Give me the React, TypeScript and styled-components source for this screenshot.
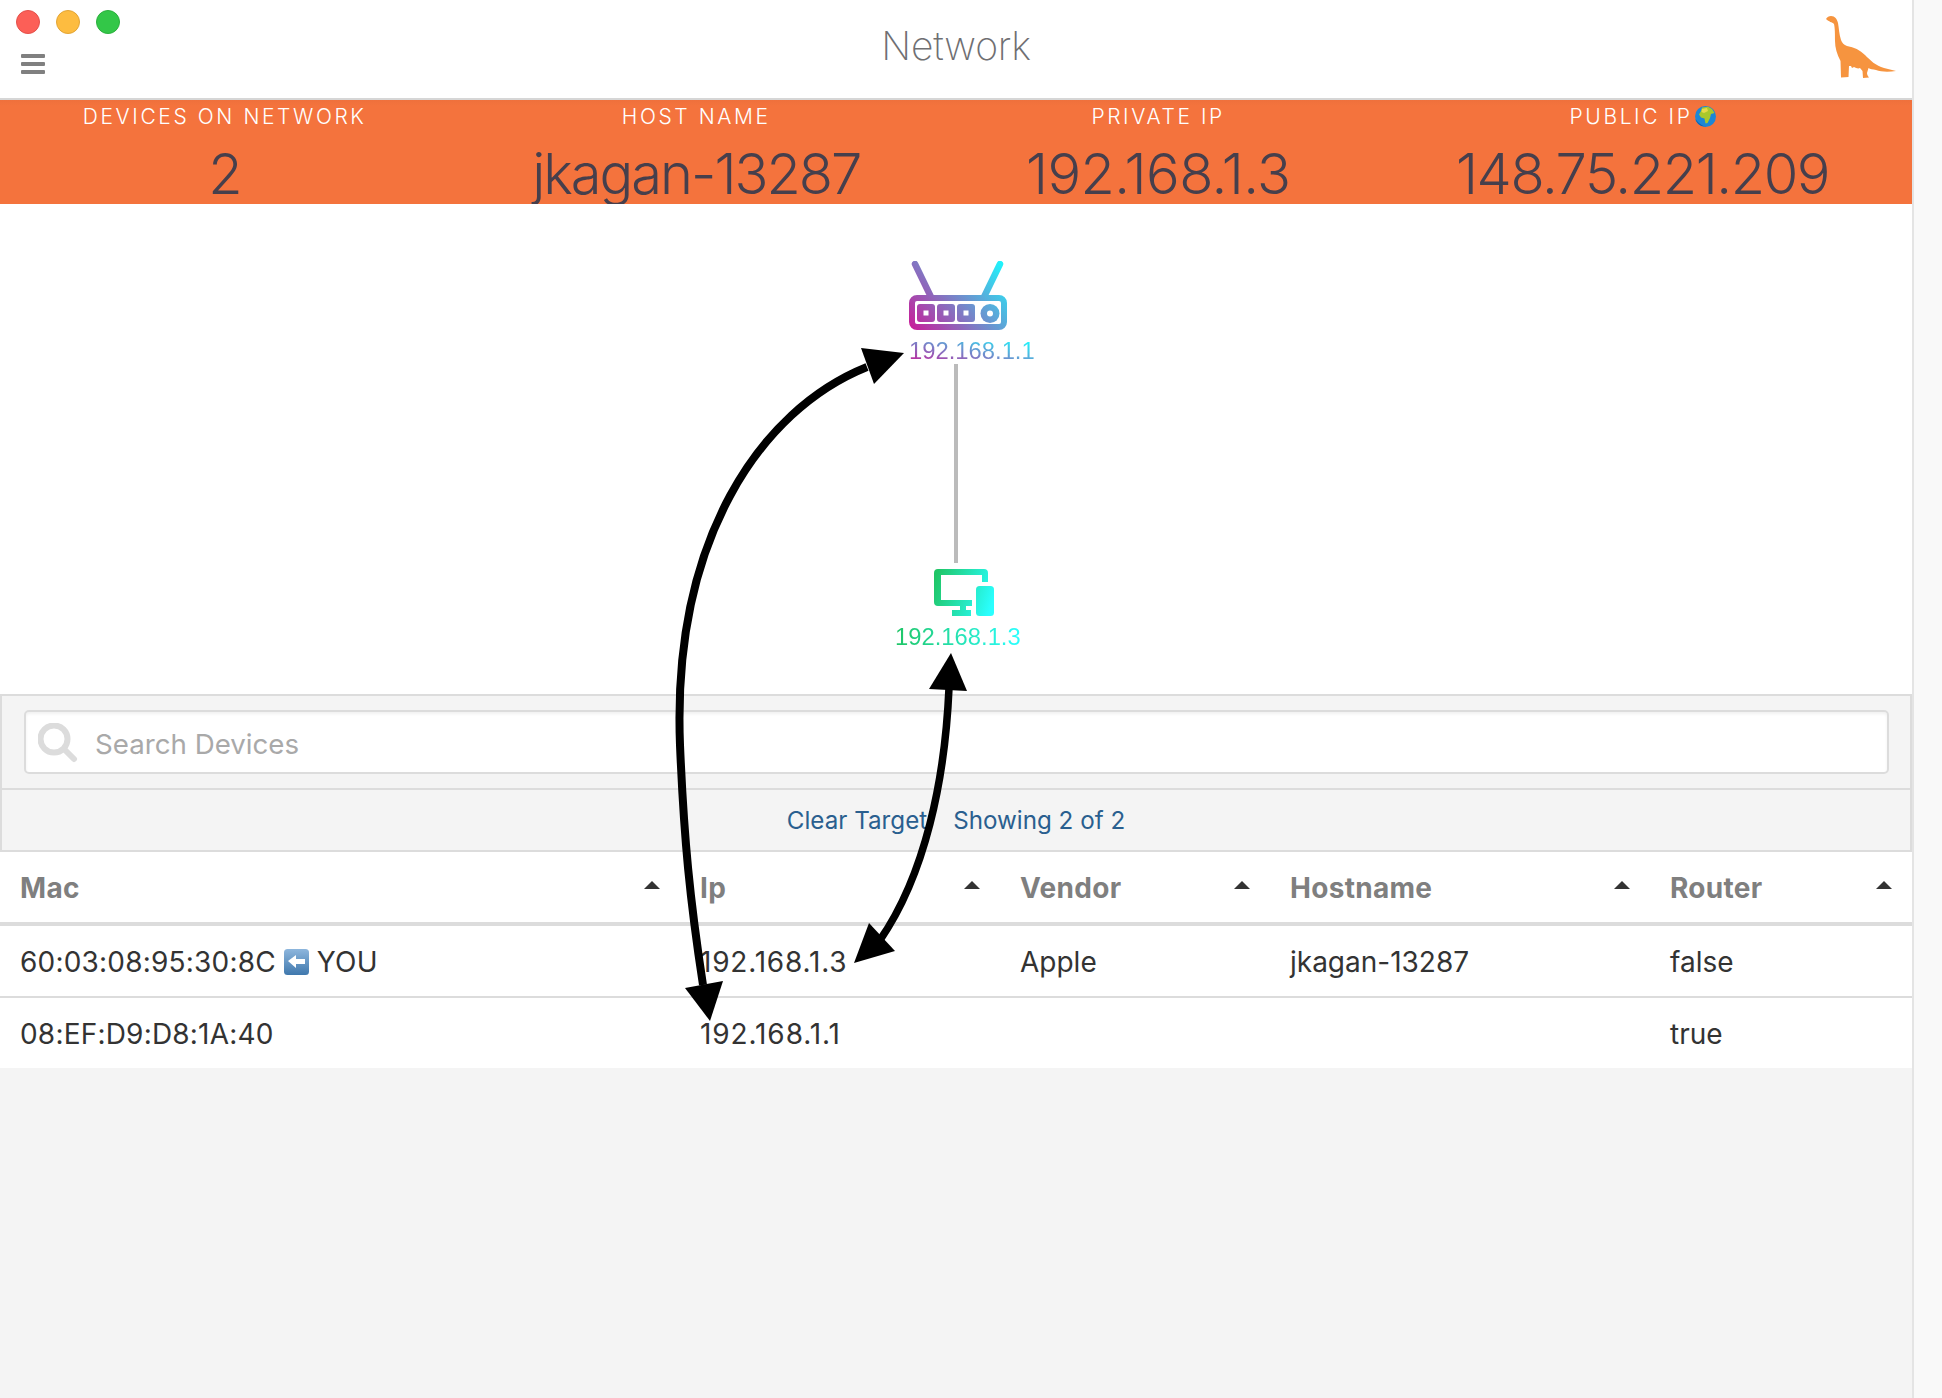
import React from "react";
import styled, { createGlobalStyle } from "styled-components";

const Global = createGlobalStyle`
  html, body { margin: 0; padding: 0; background: #f9f9f9; }
  * { box-sizing: border-box; }
  body { font-family: Inter, "Noto Sans", "Liberation Sans", sans-serif; }
`;

const Page = styled.div`
  position: relative;
  display: flex;
  width: 1942px;
  height: 1398px;
  overflow: hidden;
`;
const Main = styled.main`
  width: 1914px;
  height: 100%;
  background: #f4f4f4;
  border-right: 2px solid #e4e4e4;
  display: flex;
  flex-direction: column;
`;
const Strip = styled.aside`
  flex: 1;
  background: #f9f9f9;
`;
const TitleBar = styled.header`
  height: 100px;
  flex: none;
  background: #fff;
  border-bottom: 2px solid #d6d6d6;
  display: grid;
  grid-template-columns: 1fr auto 1fr;
  align-items: center;
`;
const LeftCluster = styled.div`
  display: flex;
  flex-direction: column;
  align-self: start;
  padding: 10px 0 0 16px;
`;
const Lights = styled.div`
  display: flex;
  gap: 16px;
`;
const Light = styled.span<{ $fill: string; $edge: string }>`
  width: 24px;
  height: 24px;
  border-radius: 50%;
  background: ${(p) => p.$fill};
  border: 1px solid ${(p) => p.$edge};
`;
const Burger = styled.div`
  margin: 20px 0 0 5px;
  width: 24px;
  display: flex;
  flex-direction: column;
  gap: 4px;
`;
const BurgerBar = styled.span`
  height: 4px;
  border-radius: 1px;
  background: #808080;
`;
const Title = styled.h1`
  margin: 0;
  position: relative;
  top: -4px;
  font-size: 39px;
  font-weight: 200;
  letter-spacing: -0.2px;
  color: #6f6f72;
`;
const DinoSlot = styled.div`
  justify-self: end;
  align-self: start;
  padding: 16px 16px 0 0;
  display: flex;
`;
const Stats = styled.section`
  height: 104px;
  flex: none;
  background: linear-gradient(#ef703c, #f4733d 6px);
  display: flex;
  justify-content: space-around;
`;
const Stat = styled.div`
  display: flex;
  flex-direction: column;
  align-items: center;
`;
const StatLabel = styled.div`
  display: flex;
  align-items: center;
  height: 28px;
  margin-top: 2px;
  font-size: 21px;
  letter-spacing: 2.6px;
  font-weight: 300;
  color: #fff;
  white-space: nowrap;
`;
const StatValue = styled.div<{ $track: number }>`
  font-size: 56px;
  line-height: 56px;
  margin-top: 16px;
  font-weight: 300;
  letter-spacing: ${(p) => p.$track}px;
  color: #463f4c;
  white-space: nowrap;
`;
const Graph = styled.section`
  position: relative;
  flex: none;
  height: 490px;
  background: #fff;
`;
const Node = styled.div<{ $x: number; $y: number }>`
  position: absolute;
  left: ${(p) => p.$x}px;
  top: ${(p) => p.$y}px;
  display: flex;
  flex-direction: column;
  align-items: flex-start;
`;
const NodeLabel = styled.span<{ $grad: string; $gap: number }>`
  font-family: "Liberation Sans", Arial, sans-serif;
  font-size: 23.8px;
  line-height: 28px;
  margin-top: ${(p) => p.$gap}px;
  background: ${(p) => p.$grad};
  -webkit-background-clip: text;
  background-clip: text;
  color: transparent;
`;
const Edge = styled.div`
  position: absolute;
  left: 954px;
  top: 160px;
  width: 4px;
  height: 199px;
  background: #bbb;
`;
const DeviceIcon = styled.svg`
  margin-left: 39px;
`;
const SearchPanel = styled.div`
  flex: none;
  height: 96px;
  background: #f4f4f4;
  border: 2px solid #dcdcdc;
  padding: 14px 21px 0 22px;
`;
const SearchBox = styled.div`
  height: 64px;
  background: #fff;
  border: 2px solid #dcdcdc;
  border-radius: 5px;
  box-shadow: inset 0 2px 3px rgba(0, 0, 0, 0.06);
  display: flex;
  align-items: center;
  padding: 2px 0 0 12px;
  gap: 17px;
`;
const Placeholder = styled.span`
  font-size: 27.7px;
  color: #a9a9a9;
  position: relative;
  top: 1px;
`;
const StatusBar = styled.div`
  flex: none;
  height: 62px;
  background: #f4f4f4;
  border: 2px solid #dcdcdc;
  border-top: 0;
  display: flex;
  justify-content: center;
  align-items: center;
  gap: 26px;
  font-size: 24.2px;
  color: #2a5f8f;
`;
const Row = styled.div<{ $head?: boolean; $last?: boolean }>`
  flex: none;
  display: grid;
  grid-template-columns: 680px 320px 270px 380px 262px;
  background: #fff;
  height: ${(p) => (p.$head ? 74 : p.$last ? 70 : 72)}px;
  border-bottom: ${(p) => (p.$head ? 4 : p.$last ? 0 : 2)}px solid #dcdcdc;
`;
const HeadCell = styled.div`
  display: flex;
  align-items: center;
  justify-content: space-between;
  padding: 2px 20px 0 20px;
  font-size: 28px;
  font-weight: 700;
  letter-spacing: 0.3px;
  color: #7f7f7f;
`;
const Caret = styled.span`
  width: 0;
  height: 0;
  margin-bottom: 6px;
  border-left: 8px solid transparent;
  border-right: 8px solid transparent;
  border-bottom: 8px solid #333;
`;
const Cell = styled.div<{ $track?: number }>`
  display: flex;
  align-items: center;
  gap: 8px;
  padding: 2px 0 0 20px;
  font-size: 28px;
  letter-spacing: ${(p) => p.$track ?? 0}px;
  color: #333;
  white-space: nowrap;
`;
const Arrows = styled.svg`
  position: absolute;
  left: 0;
  top: 0;
  pointer-events: none;
`;

const columns = ["Mac", "Ip", "Vendor", "Hostname", "Router"];

const Dino = () => (
  <svg width="70" height="62" viewBox="0 0 70 62" aria-hidden>
    <path
      fill="#f6943f"
      d="M0 3 C1 1 3 0 5 0 C9 0 11 3 12 7 C13 12 13 18 15 24 C16 27 18 29 21 30 C28 31 34 34 39 39 C44 44 50 50 58 52 C62 53 66 54 70 55 C63 56 55 56 50 54 C47 53.5 44 53 42.5 52 L41 57 C41 59 42 60 43 61.5 L37 62 L36.5 55 L34 52 C32 53 30 52 28 51 L26 52 L25 50 L23 50 L22.5 61 L15 61.5 L14.5 45 C11 38 9 32 9 25 C9 19 9 12 8 8 C6 6 3 6 0 3 Z"
    />
  </svg>
);

const Globe = () => (
  <svg width="21" height="21" viewBox="0 0 21 21" aria-hidden style={{ marginLeft: 2 }}>
    <circle cx="10.5" cy="10.5" r="10.5" fill="#1c86d6" />
    <path fill="#a9c82c" d="M7 1.5 L13 .8 L17 3 L19.5 7 L16 8 L15 12 L12.5 17 L10.5 17.5 L9.5 12.5 L6 11.5 L4 8.5 L6 5 Z" />
    <path fill="#e8d94a" d="M7 3 L12 2 L13 5 L9 7 L6.5 6 Z" />
    <path fill="#0e5aa8" d="M0.5 13 C3 17 7 20 11 20.5 C6 21 1.5 17 0.5 13 Z" />
  </svg>
);

const BackEmoji = () => (
  <svg width="25" height="26" viewBox="0 0 25 26" aria-hidden>
    <defs>
      <linearGradient id="bk" x1="0" y1="0" x2="0" y2="1">
        <stop offset="0" stopColor="#8db6dd" />
        <stop offset="1" stopColor="#3f78ad" />
      </linearGradient>
    </defs>
    <rect width="25" height="26" rx="3.5" fill="url(#bk)" />
    <path fill="#fff" d="M4 12 L12 6 L12 10 L21 10 L21 15 L12 15 L12 19 Z" />
  </svg>
);

const SearchIcon = () => (
  <svg width="40" height="40" viewBox="0 0 40 40" aria-hidden>
    <circle cx="16" cy="16" r="13.5" fill="none" stroke="#dcdcdc" strokeWidth="6" />
    <path d="M26 26 L36 36" stroke="#dcdcdc" strokeWidth="6" strokeLinecap="round" />
  </svg>
);

const RouterIcon = () => (
  <svg width="98" height="70" viewBox="0 0 98 70" aria-hidden>
    <defs>
      <linearGradient id="rt" gradientUnits="userSpaceOnUse" x1="8" y1="72" x2="90" y2="0">
        <stop offset="0" stopColor="#c6209b" />
        <stop offset="1" stopColor="#20f2fb" />
      </linearGradient>
    </defs>
    <path d="M6 3 L22 36 M91 3 L75 36" stroke="url(#rt)" strokeWidth="6.5" strokeLinecap="round" fill="none" />
    <rect x="3" y="37" width="92" height="29" rx="5" fill="#fff" stroke="url(#rt)" strokeWidth="6" />
    <rect x="8" y="43" width="18" height="18" rx="3" fill="url(#rt)" />
    <rect x="28" y="43" width="18" height="18" rx="3" fill="url(#rt)" />
    <rect x="48" y="43" width="18" height="18" rx="3" fill="url(#rt)" />
    <circle cx="81" cy="52.5" r="9.5" fill="url(#rt)" />
    <rect x="14.5" y="49.5" width="5" height="5" fill="#fff" />
    <rect x="34.5" y="49.5" width="5" height="5" fill="#fff" />
    <rect x="54.5" y="49.5" width="5" height="5" fill="#fff" />
    <circle cx="81" cy="52.5" r="3" fill="#fff" />
  </svg>
);

const MonitorIcon = () => (
  <DeviceIcon width="60" height="47" viewBox="0 0 60 47" aria-hidden>
    <defs>
      <linearGradient id="dv" gradientUnits="userSpaceOnUse" x1="0" y1="10" x2="60" y2="30">
        <stop offset="0" stopColor="#1fc565" />
        <stop offset="1" stopColor="#2affff" />
      </linearGradient>
    </defs>
    <path
      fill="url(#dv)"
      d="M4 0 H50 A4 4 0 0 1 54 4 V13 H48 V6 H7 V31 H38 V37 H32 V41 H37 V47 H18 V41 H26 V37 H4 A4 4 0 0 1 0 33 V4 A4 4 0 0 1 4 0 Z"
    />
    <rect x="42" y="17" width="18" height="30" rx="3.5" fill="url(#dv)" />
  </DeviceIcon>
);

export default function App() {
  return (
    <Page>
      <Global />
      <Main>
        <TitleBar>
          <LeftCluster>
            <Lights>
              <Light $fill="#fc5f57" $edge="#e4504a" />
              <Light $fill="#fdbc40" $edge="#e3a535" />
              <Light $fill="#33c748" $edge="#2bb03d" />
            </Lights>
            <Burger>
              <BurgerBar />
              <BurgerBar />
              <BurgerBar />
            </Burger>
          </LeftCluster>
          <Title>Network</Title>
          <DinoSlot>
            <Dino />
          </DinoSlot>
        </TitleBar>
        <Stats>
          <Stat>
            <StatLabel>DEVICES ON NETWORK</StatLabel>
            <StatValue $track={-1.4}>2</StatValue>
          </Stat>
          <Stat>
            <StatLabel>HOST NAME</StatLabel>
            <StatValue $track={-2}>jkagan-13287</StatValue>
          </Stat>
          <Stat>
            <StatLabel>PRIVATE IP</StatLabel>
            <StatValue $track={-0.6}>192.168.1.3</StatValue>
          </Stat>
          <Stat>
            <StatLabel>
              PUBLIC IP
              <Globe />
            </StatLabel>
            <StatValue $track={-1.4}>148.75.221.209</StatValue>
          </Stat>
        </Stats>
        <Graph>
          <Edge />
          <Node $x={909} $y={57}>
            <RouterIcon />
            <NodeLabel $gap={6} $grad="linear-gradient(to top right, #c6209b 5%, #20f2fb 88%)">192.168.1.1</NodeLabel>
          </Node>
          <Node $x={895} $y={365}>
            <MonitorIcon />
            <NodeLabel $gap={7} $grad="linear-gradient(to right, #1fc565, #2affff)">192.168.1.3</NodeLabel>
          </Node>
        </Graph>
        <SearchPanel>
          <SearchBox>
            <SearchIcon />
            <Placeholder>Search Devices</Placeholder>
          </SearchBox>
        </SearchPanel>
        <StatusBar>
          <span>Clear Target</span>
          <span>Showing 2 of 2</span>
        </StatusBar>
        <Row $head>
          {columns.map((c) => (
            <HeadCell key={c}>
              {c}
              <Caret />
            </HeadCell>
          ))}
        </Row>
        <Row>
          <Cell $track={0.2}>
            60:03:08:95:30:8C <BackEmoji /> YOU
          </Cell>
          <Cell $track={0.8}>192.168.1.3</Cell>
          <Cell>Apple</Cell>
          <Cell>jkagan-13287</Cell>
          <Cell>false</Cell>
        </Row>
        <Row $last>
          <Cell $track={0.2}>08:EF:D9:D8:1A:40</Cell>
          <Cell $track={0.9}>192.168.1.1</Cell>
          <Cell />
          <Cell />
          <Cell>true</Cell>
        </Row>
      </Main>
      <Strip />
      <Arrows width="1942" height="1398" viewBox="0 0 1942 1398" aria-hidden>
        <path d="M867 367 C760 410 672 540 680 745 C684 840 690 900 703 985" fill="none" stroke="#000" strokeWidth="8" />
        <polygon points="904,353 861,348 874,384" fill="#000" />
        <polygon points="710,1021 685,988 723,981" fill="#000" />
        <path d="M949 688 C945 780 925 875 880 940" fill="none" stroke="#000" strokeWidth="7.5" />
        <polygon points="951,653 929,689 967,691" fill="#000" />
        <polygon points="854,963 869,923 895,951" fill="#000" />
      </Arrows>
    </Page>
  );
}
